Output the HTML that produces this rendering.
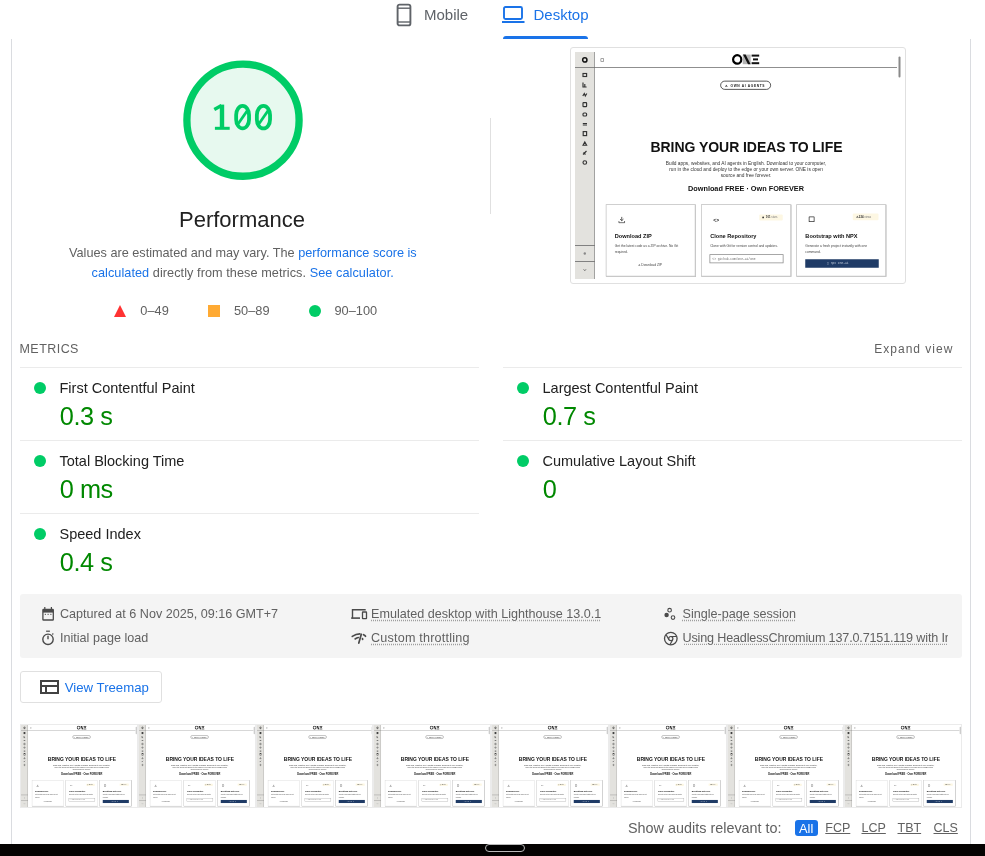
<!DOCTYPE html>
<html><head><meta charset="utf-8">
<style>
*{box-sizing:border-box}
html,body{margin:0;padding:0}
body{width:985px;height:856px;position:relative;overflow:hidden;background:#fff;font-family:"Liberation Sans",sans-serif;color:#212121}
.a{position:absolute;white-space:nowrap;line-height:1}
.vl{position:absolute;width:1px;background:#dadce0}
.hl{position:absolute;height:1px;background:#ebebeb}
a,.lnk{color:#1a73e8;text-decoration:none}
.dot{position:absolute;width:12px;height:12px;border-radius:50%;background:#0c6}
.mlabel{font-size:14.5px;color:#212121}
.mval{font-size:25.3px;color:#080;letter-spacing:-0.45px}
.meta{font-size:12.6px;color:#616161}
.ul{text-decoration:underline dotted #9e9e9e;text-underline-offset:2px}

.mk{position:absolute;left:0;top:0;width:1304.000px;height:908.000px;overflow:hidden;background:#fff;transform-origin:0 0}
.mk-a{position:absolute;white-space:nowrap;line-height:1}
.mk-sb{position:absolute;left:0;top:0;width:78.800px;height:908.000px;background:#e3e2de;border-right:3.200px solid #8a8a8a}
.mk-tl{position:absolute;left:0;top:60.800px;width:1288.000px;height:3.600px;background:#6a6a6a}
.mk-card{position:absolute;width:359.200px;height:289.600px;border:3.200px solid #c4c4c4;box-shadow:1.200px 1.200px 0 #808080;background:#fff}
.mk-h{left:33.200px;top:112.400px;font-size:22.400px;font-weight:bold;color:#111}
.mk-d{left:33.200px;top:151.200px;font-size:13.200px;line-height:24.000px;color:#444;white-space:nowrap}
</style></head>
<body><div id="root" style="position:absolute;left:0;top:0;width:985px;height:856px;will-change:transform">

<!-- tabs -->
<svg class="a" style="left:396px;top:3px" width="16" height="24" viewBox="0 0 16 24">
  <rect x="1.6" y="1.6" width="12.8" height="20.8" rx="2" fill="none" stroke="#5f6368" stroke-width="1.9"/>
  <line x1="2" y1="5.2" x2="14" y2="5.2" stroke="#5f6368" stroke-width="1.4"/>
  <line x1="2" y1="19" x2="14" y2="19" stroke="#5f6368" stroke-width="1.4"/>
</svg>
<div class="a" style="left:424px;top:7.3px;font-size:15px;color:#5f6368">Mobile</div>
<svg class="a" style="left:502px;top:6px" width="23" height="18" viewBox="0 0 23 18">
  <rect x="2" y="1" width="18" height="12" rx="1.5" fill="none" stroke="#1a73e8" stroke-width="1.9"/>
  <rect x="0" y="15" width="22.5" height="2" fill="#1a73e8"/>
</svg>
<div class="a" style="left:533.5px;top:7.3px;font-size:15px;color:#1a73e8">Desktop</div>
<div class="a" style="left:503px;top:36px;width:85px;height:3px;background:#1a73e8;border-radius:3px 3px 0 0"></div>

<!-- card borders -->
<div class="vl" style="left:11px;top:39px;height:805px"></div>
<div class="vl" style="left:970px;top:39px;height:805px"></div>

<!-- gauge -->
<svg class="a" style="left:182.5px;top:60px" width="120" height="120" viewBox="0 0 120 120">
  <circle cx="60" cy="60.15" r="56.1" fill="#e7f9ef" stroke="#0c6" stroke-width="7.3"/>
</svg>
<svg class="a" style="left:0;top:0" width="300" height="140" viewBox="0 0 300 140">
  <g fill="none" stroke="#0c6">
   <path d="M222 104.6V128" stroke-width="4.4"/>
   <path d="M214.3 109.6L221.5 105.6" stroke-width="3.4"/>
   <path d="M214.9 128.3H229.7" stroke-width="3"/>
   <rect x="236.15" y="105.9" width="12.9" height="22.5" rx="6.45" ry="9" stroke-width="3.8"/>
   <path d="M247.2 110.8L238.2 123.8" stroke-width="2.8"/>
   <rect x="256.85" y="105.9" width="13.2" height="22.5" rx="6.6" ry="9" stroke-width="3.8"/>
   <path d="M268 110.8L259 123.8" stroke-width="2.8"/>
  </g>
 </svg>

<div class="a" style="left:179px;top:208.5px;font-size:22px;color:#212121">Performance</div>
<div class="a" style="left:69px;top:246.8px;font-size:12.7px;color:#616161">Values are estimated and may vary. The <span class="lnk">performance score is</span></div>
<div class="a" style="left:91.5px;top:267.2px;font-size:12.7px;color:#616161;letter-spacing:0.06px"><span class="lnk">calculated</span> directly from these metrics. <span class="lnk">See calculator.</span></div>

<!-- legend -->
<svg class="a" style="left:114px;top:305px" width="12" height="12" viewBox="0 0 12 12"><polygon points="6,0 12,12 0,12" fill="#f33"/></svg>
<div class="a" style="left:140.3px;top:305px;font-size:12.8px;color:#616161">0–49</div>
<div class="a" style="left:208px;top:305px;width:12px;height:12px;background:#fa3"></div>
<div class="a" style="left:234px;top:305px;font-size:12.8px;color:#616161">50–89</div>
<div class="dot" style="left:309px;top:305px"></div>
<div class="a" style="left:334.5px;top:305px;font-size:12.8px;color:#616161">90–100</div>

<div class="vl" style="left:490px;top:118px;height:96px;background:#e0e0e0"></div>

<!-- screenshot thumb -->
<div id="thumb" class="a" style="left:570px;top:47px;width:336px;height:237px;border:1px solid #e0e0e0;border-radius:3px;background:#fff"></div><div class="a" style="left:575px;top:52px;width:326px;height:227px;overflow:hidden"><div class="mk" style="transform:scale(0.25)">
 <div class="mk-sb"></div>
 <div class="mk-tl"></div>
 <svg class="mk-a" style="left:0;top:0" width="80.000" height="908.000" viewBox="0 0 20 227">
  <circle cx="9.8" cy="7.9" r="2.15" fill="none" stroke="#111" stroke-width="1.5"/>
  <g fill="none" stroke="#333" stroke-width="1.15">
   <rect x="8" y="21.5" width="3.6" height="3" />
   <path d="M8 30.5v4.5h3.6M9.8 32v3"/>
   <path d="M7.8 44l1.5-2.5l1 2.5l1.5-2.5"/>
   <rect x="8" y="50.6" width="3.6" height="4" rx="0.6"/>
   <rect x="8" y="61" width="3.6" height="3" rx="1"/>
   <path d="M7.8 71.5h4.2M7.8 73h4.2"/>
   <rect x="8.2" y="79.6" width="3.4" height="4" />
   <path d="M8 93.2l1.8-3.2l1.8 3.2z"/>
   <path d="M8 102.5l3.5-3.5M8.5 100.5l2 2"/>
   <circle cx="9.8" cy="110.5" r="1.8"/>
  </g>
  <rect x="0" y="193" width="20" height="0.9" fill="#777"/>
  <rect x="0" y="209" width="20" height="0.9" fill="#777"/>
  <circle cx="9.8" cy="201.5" r="1.2" fill="#888"/>
  <path d="M8.6 217.3l1.2 1.4l1.2-1.4" fill="none" stroke="#555" stroke-width="0.8"/>
 </svg>
 <div class="mk-a" style="left:102.400px;top:24.800px;width:13.600px;height:14.400px;border:3.200px solid #888;border-radius:1.600px"></div>
 <svg class="mk-a" style="left:628.000px;top:8.000px" width="112.000" height="44.000" viewBox="0 0 28 11">
  <ellipse cx="5.2" cy="5.4" rx="4.1" ry="4.2" fill="none" stroke="#000" stroke-width="2.2"/>
  <rect x="10.7" y="0.6" width="8" height="9.6" fill="#b5b5b5"/>
  <path d="M11 0.6h2.6l5 9.6h-2.6z" fill="#111"/>
  <rect x="19.6" y="0.6" width="7.6" height="2" fill="#111"/>
  <rect x="21" y="4.4" width="5" height="2" fill="#111"/>
  <rect x="19.6" y="8.2" width="7.6" height="2" fill="#111"/>
 </svg>
 <div class="mk-a" style="left:1294.400px;top:17.600px;width:8.000px;height:84.000px;background:#8a8a8a;border-radius:4.000px"></div>
 <div class="mk-a" style="left:581.200px;top:114.800px;width:202.400px;height:36.000px;border:3.200px solid #222;border-radius:20.000px"></div>
 <div class="mk-a mk-t" style="left:601.200px;top:127.600px;font-size:13.200px;font-weight:bold;letter-spacing:2.480px;color:#222">⚠ OWN AI AGENTS</div>
 <div class="mk-a mk-t" style="left:302.000px;top:353.200px;font-size:56.000px;font-weight:bold;color:#111;letter-spacing:-0.200px">BRING YOUR IDEAS TO LIFE</div>
 <div class="mk-a mk-t" style="left:0;width:1368.000px;text-align:center;top:434.400px;font-size:19.200px;line-height:24.200px;color:#333;white-space:normal">Build apps, websites, and AI agents in English. Download to your computer,<br>run in the cloud and deploy to the edge or your own server. ONE is open<br>source and free forever.</div>
 <div class="mk-a mk-t" style="left:0;width:1368.000px;text-align:center;top:530.000px;font-size:29.200px;font-weight:bold;color:#111">Download FREE · Own FOREVER</div>

 <div class="mk-card" style="left:122.800px;top:608.800px">
  <svg class="mk-a" style="left:46.800px;top:46.000px" width="28.000" height="28.000" viewBox="0 0 7 7"><path d="M3.5 0.3v3.8M1.8 2.6l1.7 1.6l1.7-1.6M0.6 4.5v1.8h5.8v-1.8" fill="none" stroke="#333" stroke-width="0.8"/></svg>
  <div class="mk-a mk-t mk-h">Download ZIP</div>
  <div class="mk-a mk-t mk-d">Get the latest code as a ZIP archive. No Git<br>required.</div>
  <div class="mk-a mk-t" style="left:126.000px;top:234.400px;font-size:13.200px;color:#444">⏶ Download ZIP</div>
 </div>
 <div class="mk-card" style="left:504.400px;top:608.800px">
  <div class="mk-a mk-t" style="left:46.000px;top:48.800px;font-size:20.000px;color:#222;font-weight:bold">&lt;&gt;</div>
  <div class="mk-a" style="left:229.200px;top:38.000px;width:94.000px;height:24.400px;background:#fdf7e3;border-radius:4.000px"></div>
  <div class="mk-a" style="left:241.600px;top:46.400px;width:7.200px;height:7.200px;background:#333;border-radius:50%"></div>
  <div class="mk-a mk-t" style="left:256.000px;top:44.400px;font-size:11.200px;color:#333;font-weight:bold">101 <span style="font-weight:normal;color:#777">stars</span></div>
  <div class="mk-a mk-t mk-h">Clone Repository</div>
  <div class="mk-a mk-t mk-d">Clone with Git for version control and updates.</div>
  <div class="mk-a" style="left:30.400px;top:196.800px;width:296.400px;height:36.400px;border:3.200px solid #8a8a8a"></div>
  <div class="mk-a mk-t" style="left:42.000px;top:209.200px;font-size:12.000px;font-family:'Liberation Mono',monospace;color:#666">&lt;&gt;  github.com/one-ai/one</div>
 </div>
 <div class="mk-card" style="left:885.200px;top:608.800px">
  <div class="mk-a" style="left:47.200px;top:46.000px;width:22.400px;height:22.400px;border:3.200px solid #333;border-radius:2.000px"></div>
  <div class="mk-a" style="left:223.200px;top:34.400px;width:102.800px;height:26.800px;background:#fdf7e3;border-radius:4.000px"></div>
  <div class="mk-a mk-t" style="left:234.000px;top:42.400px;font-size:11.200px;color:#333;font-weight:bold">⚠ 224 <span style="font-weight:normal;color:#777">views</span></div>
  <div class="mk-a mk-t mk-h">Bootstrap with NPX</div>
  <div class="mk-a mk-t mk-d">Generate a fresh project instantly with one<br>command.</div>
  <div class="mk-a" style="left:33.200px;top:217.600px;width:293.200px;height:34.000px;background:#1f3b66"></div>
  <div class="mk-a mk-t" style="left:120.000px;top:227.200px;font-size:12.000px;font-family:'Liberation Mono',monospace;color:#bcc8d8">▢  npx one-ai</div>
 </div>
</div></div>

<!-- metrics -->
<div class="a" style="left:19.5px;top:343.3px;font-size:12.5px;letter-spacing:0.45px;color:#616161">METRICS</div>
<div class="a" style="left:874.3px;top:343.2px;font-size:12px;letter-spacing:1px;color:#616161">Expand view</div>

<div class="hl" style="left:20px;top:367px;width:459px"></div>
<div class="hl" style="left:503px;top:367px;width:459px"></div>
<div class="hl" style="left:20px;top:440px;width:459px"></div>
<div class="hl" style="left:503px;top:440px;width:459px"></div>
<div class="hl" style="left:20px;top:513px;width:459px"></div>

<div class="dot" style="left:34px;top:382px"></div>
<div class="a mlabel" style="left:59.5px;top:380.7px">First Contentful Paint</div>
<div class="a mval" style="left:59.8px;top:404.1px">0.3 s</div>
<div class="dot" style="left:34px;top:455px"></div>
<div class="a mlabel" style="left:59.5px;top:453.7px">Total Blocking Time</div>
<div class="a mval" style="left:59.8px;top:477.1px">0 ms</div>
<div class="dot" style="left:34px;top:528px"></div>
<div class="a mlabel" style="left:59.5px;top:526.7px">Speed Index</div>
<div class="a mval" style="left:59.8px;top:550.1px">0.4 s</div>

<div class="dot" style="left:517px;top:382px"></div>
<div class="a mlabel" style="left:542.5px;top:380.7px">Largest Contentful Paint</div>
<div class="a mval" style="left:542.8px;top:404.1px">0.7 s</div>
<div class="dot" style="left:517px;top:455px"></div>
<div class="a mlabel" style="left:542.5px;top:453.7px">Cumulative Layout Shift</div>
<div class="a mval" style="left:542.8px;top:477.1px">0</div>

<!-- meta box -->
<div class="a" style="left:20px;top:594px;width:942px;height:63.5px;background:#f4f4f4;border-radius:3px"></div>
<div class="a meta" style="left:60px;top:607.8px">Captured at 6 Nov 2025, 09:16 GMT+7</div>
<div class="a meta" style="left:60px;top:632px">Initial page load</div>
<div class="a meta" style="left:371px;top:607.8px"><span class="ul">Emulated desktop with Lighthouse 13.0.1</span></div>
<div class="a meta" style="left:371px;top:632px;letter-spacing:0.2px"><span class="ul">Custom throttling</span></div>
<div class="a meta" style="left:682.5px;top:607.8px"><span class="ul">Single-page session</span></div>
<div class="a meta" style="left:682.5px;top:632px;width:265.5px;overflow:hidden;letter-spacing:-0.16px"><span class="ul">Using HeadlessChromium 137.0.7151.119 with Integrated Lighthouse</span></div>

<!-- meta icons -->
<svg class="a" style="left:0;top:0;overflow:visible" width="985" height="700" viewBox="0 0 985 700">
 <g fill="none" stroke="#4a4a4a">
  <rect x="42.9" y="609.4" width="10.4" height="10.6" rx="0.6" stroke-width="1.3"/>
  <path d="M42.9 611.3h10.4" stroke-width="2.6"/>
  <path d="M44.8 607v2.4M51.4 607v2.4" stroke-width="1.2"/>
  <path d="M45.3 613.8v1.2M48.1 613.8v1.2M50.9 613.8v1.2" stroke-width="1"/>
  <circle cx="48" cy="639.3" r="5.2" stroke-width="1.4"/>
  <path d="M46.1 631.2h3.8" stroke-width="1.2"/>
  <path d="M48 635.8v3.4" stroke-width="1.4"/>
  <path d="M52.3 634.5l1-1" stroke-width="1.1"/>
  <path d="M352.5 618.2V609.7H365.7" stroke-width="1.4"/>
  <path d="M351.2 618.1H360" stroke-width="1.6"/>
  <rect x="362.5" y="612" width="4" height="6.6" rx="0.4" stroke-width="1.3"/>
  <circle cx="669.6" cy="610.2" r="1.8" stroke-width="1.1"/>
  <circle cx="673" cy="617.6" r="1.8" stroke-width="1.1"/>
  <circle cx="670.8" cy="638.6" r="6.3" stroke-width="1.3"/>
  <circle cx="670.8" cy="638.6" r="2.1" stroke-width="1.2"/>
  <path d="M670.8 636.5H676.6M668.9 639.6L666 634.5M672.7 639.7L669.9 644.8" stroke-width="1.2"/>
 </g>
 <circle cx="666.6" cy="615" r="2.2" fill="#4a4a4a"/>
 <g fill="none" stroke="#4a4a4a" stroke-linecap="round" stroke-width="1.7">
  <path d="M352.3 636.4Q356 633.9 359.8 633.9"/>
  <path d="M363.5 634.7Q364.9 635.3 365.5 636.3"/>
  <path d="M355.1 638.9Q356.8 637.9 358.4 637.5"/>
  <path d="M361.3 634.2L358.8 643.1"/>
  <path d="M362.5 638.6L362.6 639.3"/>
 </g>
</svg>
<!-- treemap button -->
<div class="a" style="left:20px;top:671px;width:142px;height:32px;border:1px solid #e0e0e0;border-radius:3px"></div>
<svg class="a" style="left:40px;top:680px" width="19" height="14" viewBox="0 0 19 14">
  <rect x="1" y="1" width="17" height="12" fill="none" stroke="#424242" stroke-width="2"/>
  <line x1="1" y1="6" x2="18" y2="6" stroke="#424242" stroke-width="2"/>
  <line x1="6" y1="6" x2="6" y2="13" stroke="#424242" stroke-width="2"/>
</svg>
<div class="a" style="left:64.8px;top:681px;font-size:13.2px;color:#1a73e8">View Treemap</div>

<!-- filmstrip -->
<div id="film" class="a" style="left:20px;top:724px;width:942px;height:85px;overflow:hidden"><div class="a" style="left:0.000px;top:0;width:117.750px;height:84.1px;border:1px solid #ebebeb;overflow:hidden"><div class="a" style="left:0;top:0;width:115.750px;height:82.1px;overflow:hidden;filter:blur(0.3px)"><div class="mk" style="transform:scale(0.088765,0.090419)">
 <div class="mk-sb"></div>
 <div class="mk-tl"></div>
 <svg class="mk-a" style="left:0;top:0" width="80.000" height="908.000" viewBox="0 0 20 227">
  <circle cx="9.8" cy="7.9" r="2.15" fill="none" stroke="#111" stroke-width="1.5"/>
  <g fill="none" stroke="#333" stroke-width="1.15">
   <rect x="8" y="21.5" width="3.6" height="3" />
   <path d="M8 30.5v4.5h3.6M9.8 32v3"/>
   <path d="M7.8 44l1.5-2.5l1 2.5l1.5-2.5"/>
   <rect x="8" y="50.6" width="3.6" height="4" rx="0.6"/>
   <rect x="8" y="61" width="3.6" height="3" rx="1"/>
   <path d="M7.8 71.5h4.2M7.8 73h4.2"/>
   <rect x="8.2" y="79.6" width="3.4" height="4" />
   <path d="M8 93.2l1.8-3.2l1.8 3.2z"/>
   <path d="M8 102.5l3.5-3.5M8.5 100.5l2 2"/>
   <circle cx="9.8" cy="110.5" r="1.8"/>
  </g>
  <rect x="0" y="193" width="20" height="0.9" fill="#777"/>
  <rect x="0" y="209" width="20" height="0.9" fill="#777"/>
  <circle cx="9.8" cy="201.5" r="1.2" fill="#888"/>
  <path d="M8.6 217.3l1.2 1.4l1.2-1.4" fill="none" stroke="#555" stroke-width="0.8"/>
 </svg>
 <div class="mk-a" style="left:102.400px;top:24.800px;width:13.600px;height:14.400px;border:3.200px solid #888;border-radius:1.600px"></div>
 <svg class="mk-a" style="left:628.000px;top:8.000px" width="112.000" height="44.000" viewBox="0 0 28 11">
  <ellipse cx="5.2" cy="5.4" rx="4.1" ry="4.2" fill="none" stroke="#000" stroke-width="2.2"/>
  <rect x="10.7" y="0.6" width="8" height="9.6" fill="#b5b5b5"/>
  <path d="M11 0.6h2.6l5 9.6h-2.6z" fill="#111"/>
  <rect x="19.6" y="0.6" width="7.6" height="2" fill="#111"/>
  <rect x="21" y="4.4" width="5" height="2" fill="#111"/>
  <rect x="19.6" y="8.2" width="7.6" height="2" fill="#111"/>
 </svg>
 <div class="mk-a" style="left:1294.400px;top:17.600px;width:8.000px;height:84.000px;background:#8a8a8a;border-radius:4.000px"></div>
 <div class="mk-a" style="left:581.200px;top:114.800px;width:202.400px;height:36.000px;border:3.200px solid #222;border-radius:20.000px"></div>
 <div class="mk-a mk-t" style="left:601.200px;top:127.600px;font-size:13.200px;font-weight:bold;letter-spacing:2.480px;color:#222">⚠ OWN AI AGENTS</div>
 <div class="mk-a mk-t" style="left:302.000px;top:353.200px;font-size:56.000px;font-weight:bold;color:#111;letter-spacing:-0.200px">BRING YOUR IDEAS TO LIFE</div>
 <div class="mk-a mk-t" style="left:0;width:1368.000px;text-align:center;top:434.400px;font-size:19.200px;line-height:24.200px;color:#333;white-space:normal">Build apps, websites, and AI agents in English. Download to your computer,<br>run in the cloud and deploy to the edge or your own server. ONE is open<br>source and free forever.</div>
 <div class="mk-a mk-t" style="left:0;width:1368.000px;text-align:center;top:530.000px;font-size:29.200px;font-weight:bold;color:#111">Download FREE · Own FOREVER</div>

 <div class="mk-card" style="left:122.800px;top:608.800px">
  <svg class="mk-a" style="left:46.800px;top:46.000px" width="28.000" height="28.000" viewBox="0 0 7 7"><path d="M3.5 0.3v3.8M1.8 2.6l1.7 1.6l1.7-1.6M0.6 4.5v1.8h5.8v-1.8" fill="none" stroke="#333" stroke-width="0.8"/></svg>
  <div class="mk-a mk-t mk-h">Download ZIP</div>
  <div class="mk-a mk-t mk-d">Get the latest code as a ZIP archive. No Git<br>required.</div>
  <div class="mk-a mk-t" style="left:126.000px;top:234.400px;font-size:13.200px;color:#444">⏶ Download ZIP</div>
 </div>
 <div class="mk-card" style="left:504.400px;top:608.800px">
  <div class="mk-a mk-t" style="left:46.000px;top:48.800px;font-size:20.000px;color:#222;font-weight:bold">&lt;&gt;</div>
  <div class="mk-a" style="left:229.200px;top:38.000px;width:94.000px;height:24.400px;background:#fdf7e3;border-radius:4.000px"></div>
  <div class="mk-a" style="left:241.600px;top:46.400px;width:7.200px;height:7.200px;background:#333;border-radius:50%"></div>
  <div class="mk-a mk-t" style="left:256.000px;top:44.400px;font-size:11.200px;color:#333;font-weight:bold">101 <span style="font-weight:normal;color:#777">stars</span></div>
  <div class="mk-a mk-t mk-h">Clone Repository</div>
  <div class="mk-a mk-t mk-d">Clone with Git for version control and updates.</div>
  <div class="mk-a" style="left:30.400px;top:196.800px;width:296.400px;height:36.400px;border:3.200px solid #8a8a8a"></div>
  <div class="mk-a mk-t" style="left:42.000px;top:209.200px;font-size:12.000px;font-family:'Liberation Mono',monospace;color:#666">&lt;&gt;  github.com/one-ai/one</div>
 </div>
 <div class="mk-card" style="left:885.200px;top:608.800px">
  <div class="mk-a" style="left:47.200px;top:46.000px;width:22.400px;height:22.400px;border:3.200px solid #333;border-radius:2.000px"></div>
  <div class="mk-a" style="left:223.200px;top:34.400px;width:102.800px;height:26.800px;background:#fdf7e3;border-radius:4.000px"></div>
  <div class="mk-a mk-t" style="left:234.000px;top:42.400px;font-size:11.200px;color:#333;font-weight:bold">⚠ 224 <span style="font-weight:normal;color:#777">views</span></div>
  <div class="mk-a mk-t mk-h">Bootstrap with NPX</div>
  <div class="mk-a mk-t mk-d">Generate a fresh project instantly with one<br>command.</div>
  <div class="mk-a" style="left:33.200px;top:217.600px;width:293.200px;height:34.000px;background:#1f3b66"></div>
  <div class="mk-a mk-t" style="left:120.000px;top:227.200px;font-size:12.000px;font-family:'Liberation Mono',monospace;color:#bcc8d8">▢  npx one-ai</div>
 </div>
</div></div></div><div class="a" style="left:117.750px;top:0;width:117.750px;height:84.1px;border:1px solid #ebebeb;overflow:hidden"><div class="a" style="left:0;top:0;width:115.750px;height:82.1px;overflow:hidden;filter:blur(0.3px)"><div class="mk" style="transform:scale(0.088765,0.090419)">
 <div class="mk-sb"></div>
 <div class="mk-tl"></div>
 <svg class="mk-a" style="left:0;top:0" width="80.000" height="908.000" viewBox="0 0 20 227">
  <circle cx="9.8" cy="7.9" r="2.15" fill="none" stroke="#111" stroke-width="1.5"/>
  <g fill="none" stroke="#333" stroke-width="1.15">
   <rect x="8" y="21.5" width="3.6" height="3" />
   <path d="M8 30.5v4.5h3.6M9.8 32v3"/>
   <path d="M7.8 44l1.5-2.5l1 2.5l1.5-2.5"/>
   <rect x="8" y="50.6" width="3.6" height="4" rx="0.6"/>
   <rect x="8" y="61" width="3.6" height="3" rx="1"/>
   <path d="M7.8 71.5h4.2M7.8 73h4.2"/>
   <rect x="8.2" y="79.6" width="3.4" height="4" />
   <path d="M8 93.2l1.8-3.2l1.8 3.2z"/>
   <path d="M8 102.5l3.5-3.5M8.5 100.5l2 2"/>
   <circle cx="9.8" cy="110.5" r="1.8"/>
  </g>
  <rect x="0" y="193" width="20" height="0.9" fill="#777"/>
  <rect x="0" y="209" width="20" height="0.9" fill="#777"/>
  <circle cx="9.8" cy="201.5" r="1.2" fill="#888"/>
  <path d="M8.6 217.3l1.2 1.4l1.2-1.4" fill="none" stroke="#555" stroke-width="0.8"/>
 </svg>
 <div class="mk-a" style="left:102.400px;top:24.800px;width:13.600px;height:14.400px;border:3.200px solid #888;border-radius:1.600px"></div>
 <svg class="mk-a" style="left:628.000px;top:8.000px" width="112.000" height="44.000" viewBox="0 0 28 11">
  <ellipse cx="5.2" cy="5.4" rx="4.1" ry="4.2" fill="none" stroke="#000" stroke-width="2.2"/>
  <rect x="10.7" y="0.6" width="8" height="9.6" fill="#b5b5b5"/>
  <path d="M11 0.6h2.6l5 9.6h-2.6z" fill="#111"/>
  <rect x="19.6" y="0.6" width="7.6" height="2" fill="#111"/>
  <rect x="21" y="4.4" width="5" height="2" fill="#111"/>
  <rect x="19.6" y="8.2" width="7.6" height="2" fill="#111"/>
 </svg>
 <div class="mk-a" style="left:1294.400px;top:17.600px;width:8.000px;height:84.000px;background:#8a8a8a;border-radius:4.000px"></div>
 <div class="mk-a" style="left:581.200px;top:114.800px;width:202.400px;height:36.000px;border:3.200px solid #222;border-radius:20.000px"></div>
 <div class="mk-a mk-t" style="left:601.200px;top:127.600px;font-size:13.200px;font-weight:bold;letter-spacing:2.480px;color:#222">⚠ OWN AI AGENTS</div>
 <div class="mk-a mk-t" style="left:302.000px;top:353.200px;font-size:56.000px;font-weight:bold;color:#111;letter-spacing:-0.200px">BRING YOUR IDEAS TO LIFE</div>
 <div class="mk-a mk-t" style="left:0;width:1368.000px;text-align:center;top:434.400px;font-size:19.200px;line-height:24.200px;color:#333;white-space:normal">Build apps, websites, and AI agents in English. Download to your computer,<br>run in the cloud and deploy to the edge or your own server. ONE is open<br>source and free forever.</div>
 <div class="mk-a mk-t" style="left:0;width:1368.000px;text-align:center;top:530.000px;font-size:29.200px;font-weight:bold;color:#111">Download FREE · Own FOREVER</div>

 <div class="mk-card" style="left:122.800px;top:608.800px">
  <svg class="mk-a" style="left:46.800px;top:46.000px" width="28.000" height="28.000" viewBox="0 0 7 7"><path d="M3.5 0.3v3.8M1.8 2.6l1.7 1.6l1.7-1.6M0.6 4.5v1.8h5.8v-1.8" fill="none" stroke="#333" stroke-width="0.8"/></svg>
  <div class="mk-a mk-t mk-h">Download ZIP</div>
  <div class="mk-a mk-t mk-d">Get the latest code as a ZIP archive. No Git<br>required.</div>
  <div class="mk-a mk-t" style="left:126.000px;top:234.400px;font-size:13.200px;color:#444">⏶ Download ZIP</div>
 </div>
 <div class="mk-card" style="left:504.400px;top:608.800px">
  <div class="mk-a mk-t" style="left:46.000px;top:48.800px;font-size:20.000px;color:#222;font-weight:bold">&lt;&gt;</div>
  <div class="mk-a" style="left:229.200px;top:38.000px;width:94.000px;height:24.400px;background:#fdf7e3;border-radius:4.000px"></div>
  <div class="mk-a" style="left:241.600px;top:46.400px;width:7.200px;height:7.200px;background:#333;border-radius:50%"></div>
  <div class="mk-a mk-t" style="left:256.000px;top:44.400px;font-size:11.200px;color:#333;font-weight:bold">101 <span style="font-weight:normal;color:#777">stars</span></div>
  <div class="mk-a mk-t mk-h">Clone Repository</div>
  <div class="mk-a mk-t mk-d">Clone with Git for version control and updates.</div>
  <div class="mk-a" style="left:30.400px;top:196.800px;width:296.400px;height:36.400px;border:3.200px solid #8a8a8a"></div>
  <div class="mk-a mk-t" style="left:42.000px;top:209.200px;font-size:12.000px;font-family:'Liberation Mono',monospace;color:#666">&lt;&gt;  github.com/one-ai/one</div>
 </div>
 <div class="mk-card" style="left:885.200px;top:608.800px">
  <div class="mk-a" style="left:47.200px;top:46.000px;width:22.400px;height:22.400px;border:3.200px solid #333;border-radius:2.000px"></div>
  <div class="mk-a" style="left:223.200px;top:34.400px;width:102.800px;height:26.800px;background:#fdf7e3;border-radius:4.000px"></div>
  <div class="mk-a mk-t" style="left:234.000px;top:42.400px;font-size:11.200px;color:#333;font-weight:bold">⚠ 224 <span style="font-weight:normal;color:#777">views</span></div>
  <div class="mk-a mk-t mk-h">Bootstrap with NPX</div>
  <div class="mk-a mk-t mk-d">Generate a fresh project instantly with one<br>command.</div>
  <div class="mk-a" style="left:33.200px;top:217.600px;width:293.200px;height:34.000px;background:#1f3b66"></div>
  <div class="mk-a mk-t" style="left:120.000px;top:227.200px;font-size:12.000px;font-family:'Liberation Mono',monospace;color:#bcc8d8">▢  npx one-ai</div>
 </div>
</div></div></div><div class="a" style="left:235.500px;top:0;width:117.750px;height:84.1px;border:1px solid #ebebeb;overflow:hidden"><div class="a" style="left:0;top:0;width:115.750px;height:82.1px;overflow:hidden;filter:blur(0.3px)"><div class="mk" style="transform:scale(0.088765,0.090419)">
 <div class="mk-sb"></div>
 <div class="mk-tl"></div>
 <svg class="mk-a" style="left:0;top:0" width="80.000" height="908.000" viewBox="0 0 20 227">
  <circle cx="9.8" cy="7.9" r="2.15" fill="none" stroke="#111" stroke-width="1.5"/>
  <g fill="none" stroke="#333" stroke-width="1.15">
   <rect x="8" y="21.5" width="3.6" height="3" />
   <path d="M8 30.5v4.5h3.6M9.8 32v3"/>
   <path d="M7.8 44l1.5-2.5l1 2.5l1.5-2.5"/>
   <rect x="8" y="50.6" width="3.6" height="4" rx="0.6"/>
   <rect x="8" y="61" width="3.6" height="3" rx="1"/>
   <path d="M7.8 71.5h4.2M7.8 73h4.2"/>
   <rect x="8.2" y="79.6" width="3.4" height="4" />
   <path d="M8 93.2l1.8-3.2l1.8 3.2z"/>
   <path d="M8 102.5l3.5-3.5M8.5 100.5l2 2"/>
   <circle cx="9.8" cy="110.5" r="1.8"/>
  </g>
  <rect x="0" y="193" width="20" height="0.9" fill="#777"/>
  <rect x="0" y="209" width="20" height="0.9" fill="#777"/>
  <circle cx="9.8" cy="201.5" r="1.2" fill="#888"/>
  <path d="M8.6 217.3l1.2 1.4l1.2-1.4" fill="none" stroke="#555" stroke-width="0.8"/>
 </svg>
 <div class="mk-a" style="left:102.400px;top:24.800px;width:13.600px;height:14.400px;border:3.200px solid #888;border-radius:1.600px"></div>
 <svg class="mk-a" style="left:628.000px;top:8.000px" width="112.000" height="44.000" viewBox="0 0 28 11">
  <ellipse cx="5.2" cy="5.4" rx="4.1" ry="4.2" fill="none" stroke="#000" stroke-width="2.2"/>
  <rect x="10.7" y="0.6" width="8" height="9.6" fill="#b5b5b5"/>
  <path d="M11 0.6h2.6l5 9.6h-2.6z" fill="#111"/>
  <rect x="19.6" y="0.6" width="7.6" height="2" fill="#111"/>
  <rect x="21" y="4.4" width="5" height="2" fill="#111"/>
  <rect x="19.6" y="8.2" width="7.6" height="2" fill="#111"/>
 </svg>
 <div class="mk-a" style="left:1294.400px;top:17.600px;width:8.000px;height:84.000px;background:#8a8a8a;border-radius:4.000px"></div>
 <div class="mk-a" style="left:581.200px;top:114.800px;width:202.400px;height:36.000px;border:3.200px solid #222;border-radius:20.000px"></div>
 <div class="mk-a mk-t" style="left:601.200px;top:127.600px;font-size:13.200px;font-weight:bold;letter-spacing:2.480px;color:#222">⚠ OWN AI AGENTS</div>
 <div class="mk-a mk-t" style="left:302.000px;top:353.200px;font-size:56.000px;font-weight:bold;color:#111;letter-spacing:-0.200px">BRING YOUR IDEAS TO LIFE</div>
 <div class="mk-a mk-t" style="left:0;width:1368.000px;text-align:center;top:434.400px;font-size:19.200px;line-height:24.200px;color:#333;white-space:normal">Build apps, websites, and AI agents in English. Download to your computer,<br>run in the cloud and deploy to the edge or your own server. ONE is open<br>source and free forever.</div>
 <div class="mk-a mk-t" style="left:0;width:1368.000px;text-align:center;top:530.000px;font-size:29.200px;font-weight:bold;color:#111">Download FREE · Own FOREVER</div>

 <div class="mk-card" style="left:122.800px;top:608.800px">
  <svg class="mk-a" style="left:46.800px;top:46.000px" width="28.000" height="28.000" viewBox="0 0 7 7"><path d="M3.5 0.3v3.8M1.8 2.6l1.7 1.6l1.7-1.6M0.6 4.5v1.8h5.8v-1.8" fill="none" stroke="#333" stroke-width="0.8"/></svg>
  <div class="mk-a mk-t mk-h">Download ZIP</div>
  <div class="mk-a mk-t mk-d">Get the latest code as a ZIP archive. No Git<br>required.</div>
  <div class="mk-a mk-t" style="left:126.000px;top:234.400px;font-size:13.200px;color:#444">⏶ Download ZIP</div>
 </div>
 <div class="mk-card" style="left:504.400px;top:608.800px">
  <div class="mk-a mk-t" style="left:46.000px;top:48.800px;font-size:20.000px;color:#222;font-weight:bold">&lt;&gt;</div>
  <div class="mk-a" style="left:229.200px;top:38.000px;width:94.000px;height:24.400px;background:#fdf7e3;border-radius:4.000px"></div>
  <div class="mk-a" style="left:241.600px;top:46.400px;width:7.200px;height:7.200px;background:#333;border-radius:50%"></div>
  <div class="mk-a mk-t" style="left:256.000px;top:44.400px;font-size:11.200px;color:#333;font-weight:bold">101 <span style="font-weight:normal;color:#777">stars</span></div>
  <div class="mk-a mk-t mk-h">Clone Repository</div>
  <div class="mk-a mk-t mk-d">Clone with Git for version control and updates.</div>
  <div class="mk-a" style="left:30.400px;top:196.800px;width:296.400px;height:36.400px;border:3.200px solid #8a8a8a"></div>
  <div class="mk-a mk-t" style="left:42.000px;top:209.200px;font-size:12.000px;font-family:'Liberation Mono',monospace;color:#666">&lt;&gt;  github.com/one-ai/one</div>
 </div>
 <div class="mk-card" style="left:885.200px;top:608.800px">
  <div class="mk-a" style="left:47.200px;top:46.000px;width:22.400px;height:22.400px;border:3.200px solid #333;border-radius:2.000px"></div>
  <div class="mk-a" style="left:223.200px;top:34.400px;width:102.800px;height:26.800px;background:#fdf7e3;border-radius:4.000px"></div>
  <div class="mk-a mk-t" style="left:234.000px;top:42.400px;font-size:11.200px;color:#333;font-weight:bold">⚠ 224 <span style="font-weight:normal;color:#777">views</span></div>
  <div class="mk-a mk-t mk-h">Bootstrap with NPX</div>
  <div class="mk-a mk-t mk-d">Generate a fresh project instantly with one<br>command.</div>
  <div class="mk-a" style="left:33.200px;top:217.600px;width:293.200px;height:34.000px;background:#1f3b66"></div>
  <div class="mk-a mk-t" style="left:120.000px;top:227.200px;font-size:12.000px;font-family:'Liberation Mono',monospace;color:#bcc8d8">▢  npx one-ai</div>
 </div>
</div></div></div><div class="a" style="left:353.250px;top:0;width:117.750px;height:84.1px;border:1px solid #ebebeb;overflow:hidden"><div class="a" style="left:0;top:0;width:115.750px;height:82.1px;overflow:hidden;filter:blur(0.3px)"><div class="mk" style="transform:scale(0.088765,0.090419)">
 <div class="mk-sb"></div>
 <div class="mk-tl"></div>
 <svg class="mk-a" style="left:0;top:0" width="80.000" height="908.000" viewBox="0 0 20 227">
  <circle cx="9.8" cy="7.9" r="2.15" fill="none" stroke="#111" stroke-width="1.5"/>
  <g fill="none" stroke="#333" stroke-width="1.15">
   <rect x="8" y="21.5" width="3.6" height="3" />
   <path d="M8 30.5v4.5h3.6M9.8 32v3"/>
   <path d="M7.8 44l1.5-2.5l1 2.5l1.5-2.5"/>
   <rect x="8" y="50.6" width="3.6" height="4" rx="0.6"/>
   <rect x="8" y="61" width="3.6" height="3" rx="1"/>
   <path d="M7.8 71.5h4.2M7.8 73h4.2"/>
   <rect x="8.2" y="79.6" width="3.4" height="4" />
   <path d="M8 93.2l1.8-3.2l1.8 3.2z"/>
   <path d="M8 102.5l3.5-3.5M8.5 100.5l2 2"/>
   <circle cx="9.8" cy="110.5" r="1.8"/>
  </g>
  <rect x="0" y="193" width="20" height="0.9" fill="#777"/>
  <rect x="0" y="209" width="20" height="0.9" fill="#777"/>
  <circle cx="9.8" cy="201.5" r="1.2" fill="#888"/>
  <path d="M8.6 217.3l1.2 1.4l1.2-1.4" fill="none" stroke="#555" stroke-width="0.8"/>
 </svg>
 <div class="mk-a" style="left:102.400px;top:24.800px;width:13.600px;height:14.400px;border:3.200px solid #888;border-radius:1.600px"></div>
 <svg class="mk-a" style="left:628.000px;top:8.000px" width="112.000" height="44.000" viewBox="0 0 28 11">
  <ellipse cx="5.2" cy="5.4" rx="4.1" ry="4.2" fill="none" stroke="#000" stroke-width="2.2"/>
  <rect x="10.7" y="0.6" width="8" height="9.6" fill="#b5b5b5"/>
  <path d="M11 0.6h2.6l5 9.6h-2.6z" fill="#111"/>
  <rect x="19.6" y="0.6" width="7.6" height="2" fill="#111"/>
  <rect x="21" y="4.4" width="5" height="2" fill="#111"/>
  <rect x="19.6" y="8.2" width="7.6" height="2" fill="#111"/>
 </svg>
 <div class="mk-a" style="left:1294.400px;top:17.600px;width:8.000px;height:84.000px;background:#8a8a8a;border-radius:4.000px"></div>
 <div class="mk-a" style="left:581.200px;top:114.800px;width:202.400px;height:36.000px;border:3.200px solid #222;border-radius:20.000px"></div>
 <div class="mk-a mk-t" style="left:601.200px;top:127.600px;font-size:13.200px;font-weight:bold;letter-spacing:2.480px;color:#222">⚠ OWN AI AGENTS</div>
 <div class="mk-a mk-t" style="left:302.000px;top:353.200px;font-size:56.000px;font-weight:bold;color:#111;letter-spacing:-0.200px">BRING YOUR IDEAS TO LIFE</div>
 <div class="mk-a mk-t" style="left:0;width:1368.000px;text-align:center;top:434.400px;font-size:19.200px;line-height:24.200px;color:#333;white-space:normal">Build apps, websites, and AI agents in English. Download to your computer,<br>run in the cloud and deploy to the edge or your own server. ONE is open<br>source and free forever.</div>
 <div class="mk-a mk-t" style="left:0;width:1368.000px;text-align:center;top:530.000px;font-size:29.200px;font-weight:bold;color:#111">Download FREE · Own FOREVER</div>

 <div class="mk-card" style="left:122.800px;top:608.800px">
  <svg class="mk-a" style="left:46.800px;top:46.000px" width="28.000" height="28.000" viewBox="0 0 7 7"><path d="M3.5 0.3v3.8M1.8 2.6l1.7 1.6l1.7-1.6M0.6 4.5v1.8h5.8v-1.8" fill="none" stroke="#333" stroke-width="0.8"/></svg>
  <div class="mk-a mk-t mk-h">Download ZIP</div>
  <div class="mk-a mk-t mk-d">Get the latest code as a ZIP archive. No Git<br>required.</div>
  <div class="mk-a mk-t" style="left:126.000px;top:234.400px;font-size:13.200px;color:#444">⏶ Download ZIP</div>
 </div>
 <div class="mk-card" style="left:504.400px;top:608.800px">
  <div class="mk-a mk-t" style="left:46.000px;top:48.800px;font-size:20.000px;color:#222;font-weight:bold">&lt;&gt;</div>
  <div class="mk-a" style="left:229.200px;top:38.000px;width:94.000px;height:24.400px;background:#fdf7e3;border-radius:4.000px"></div>
  <div class="mk-a" style="left:241.600px;top:46.400px;width:7.200px;height:7.200px;background:#333;border-radius:50%"></div>
  <div class="mk-a mk-t" style="left:256.000px;top:44.400px;font-size:11.200px;color:#333;font-weight:bold">101 <span style="font-weight:normal;color:#777">stars</span></div>
  <div class="mk-a mk-t mk-h">Clone Repository</div>
  <div class="mk-a mk-t mk-d">Clone with Git for version control and updates.</div>
  <div class="mk-a" style="left:30.400px;top:196.800px;width:296.400px;height:36.400px;border:3.200px solid #8a8a8a"></div>
  <div class="mk-a mk-t" style="left:42.000px;top:209.200px;font-size:12.000px;font-family:'Liberation Mono',monospace;color:#666">&lt;&gt;  github.com/one-ai/one</div>
 </div>
 <div class="mk-card" style="left:885.200px;top:608.800px">
  <div class="mk-a" style="left:47.200px;top:46.000px;width:22.400px;height:22.400px;border:3.200px solid #333;border-radius:2.000px"></div>
  <div class="mk-a" style="left:223.200px;top:34.400px;width:102.800px;height:26.800px;background:#fdf7e3;border-radius:4.000px"></div>
  <div class="mk-a mk-t" style="left:234.000px;top:42.400px;font-size:11.200px;color:#333;font-weight:bold">⚠ 224 <span style="font-weight:normal;color:#777">views</span></div>
  <div class="mk-a mk-t mk-h">Bootstrap with NPX</div>
  <div class="mk-a mk-t mk-d">Generate a fresh project instantly with one<br>command.</div>
  <div class="mk-a" style="left:33.200px;top:217.600px;width:293.200px;height:34.000px;background:#1f3b66"></div>
  <div class="mk-a mk-t" style="left:120.000px;top:227.200px;font-size:12.000px;font-family:'Liberation Mono',monospace;color:#bcc8d8">▢  npx one-ai</div>
 </div>
</div></div></div><div class="a" style="left:471.000px;top:0;width:117.750px;height:84.1px;border:1px solid #ebebeb;overflow:hidden"><div class="a" style="left:0;top:0;width:115.750px;height:82.1px;overflow:hidden;filter:blur(0.3px)"><div class="mk" style="transform:scale(0.088765,0.090419)">
 <div class="mk-sb"></div>
 <div class="mk-tl"></div>
 <svg class="mk-a" style="left:0;top:0" width="80.000" height="908.000" viewBox="0 0 20 227">
  <circle cx="9.8" cy="7.9" r="2.15" fill="none" stroke="#111" stroke-width="1.5"/>
  <g fill="none" stroke="#333" stroke-width="1.15">
   <rect x="8" y="21.5" width="3.6" height="3" />
   <path d="M8 30.5v4.5h3.6M9.8 32v3"/>
   <path d="M7.8 44l1.5-2.5l1 2.5l1.5-2.5"/>
   <rect x="8" y="50.6" width="3.6" height="4" rx="0.6"/>
   <rect x="8" y="61" width="3.6" height="3" rx="1"/>
   <path d="M7.8 71.5h4.2M7.8 73h4.2"/>
   <rect x="8.2" y="79.6" width="3.4" height="4" />
   <path d="M8 93.2l1.8-3.2l1.8 3.2z"/>
   <path d="M8 102.5l3.5-3.5M8.5 100.5l2 2"/>
   <circle cx="9.8" cy="110.5" r="1.8"/>
  </g>
  <rect x="0" y="193" width="20" height="0.9" fill="#777"/>
  <rect x="0" y="209" width="20" height="0.9" fill="#777"/>
  <circle cx="9.8" cy="201.5" r="1.2" fill="#888"/>
  <path d="M8.6 217.3l1.2 1.4l1.2-1.4" fill="none" stroke="#555" stroke-width="0.8"/>
 </svg>
 <div class="mk-a" style="left:102.400px;top:24.800px;width:13.600px;height:14.400px;border:3.200px solid #888;border-radius:1.600px"></div>
 <svg class="mk-a" style="left:628.000px;top:8.000px" width="112.000" height="44.000" viewBox="0 0 28 11">
  <ellipse cx="5.2" cy="5.4" rx="4.1" ry="4.2" fill="none" stroke="#000" stroke-width="2.2"/>
  <rect x="10.7" y="0.6" width="8" height="9.6" fill="#b5b5b5"/>
  <path d="M11 0.6h2.6l5 9.6h-2.6z" fill="#111"/>
  <rect x="19.6" y="0.6" width="7.6" height="2" fill="#111"/>
  <rect x="21" y="4.4" width="5" height="2" fill="#111"/>
  <rect x="19.6" y="8.2" width="7.6" height="2" fill="#111"/>
 </svg>
 <div class="mk-a" style="left:1294.400px;top:17.600px;width:8.000px;height:84.000px;background:#8a8a8a;border-radius:4.000px"></div>
 <div class="mk-a" style="left:581.200px;top:114.800px;width:202.400px;height:36.000px;border:3.200px solid #222;border-radius:20.000px"></div>
 <div class="mk-a mk-t" style="left:601.200px;top:127.600px;font-size:13.200px;font-weight:bold;letter-spacing:2.480px;color:#222">⚠ OWN AI AGENTS</div>
 <div class="mk-a mk-t" style="left:302.000px;top:353.200px;font-size:56.000px;font-weight:bold;color:#111;letter-spacing:-0.200px">BRING YOUR IDEAS TO LIFE</div>
 <div class="mk-a mk-t" style="left:0;width:1368.000px;text-align:center;top:434.400px;font-size:19.200px;line-height:24.200px;color:#333;white-space:normal">Build apps, websites, and AI agents in English. Download to your computer,<br>run in the cloud and deploy to the edge or your own server. ONE is open<br>source and free forever.</div>
 <div class="mk-a mk-t" style="left:0;width:1368.000px;text-align:center;top:530.000px;font-size:29.200px;font-weight:bold;color:#111">Download FREE · Own FOREVER</div>

 <div class="mk-card" style="left:122.800px;top:608.800px">
  <svg class="mk-a" style="left:46.800px;top:46.000px" width="28.000" height="28.000" viewBox="0 0 7 7"><path d="M3.5 0.3v3.8M1.8 2.6l1.7 1.6l1.7-1.6M0.6 4.5v1.8h5.8v-1.8" fill="none" stroke="#333" stroke-width="0.8"/></svg>
  <div class="mk-a mk-t mk-h">Download ZIP</div>
  <div class="mk-a mk-t mk-d">Get the latest code as a ZIP archive. No Git<br>required.</div>
  <div class="mk-a mk-t" style="left:126.000px;top:234.400px;font-size:13.200px;color:#444">⏶ Download ZIP</div>
 </div>
 <div class="mk-card" style="left:504.400px;top:608.800px">
  <div class="mk-a mk-t" style="left:46.000px;top:48.800px;font-size:20.000px;color:#222;font-weight:bold">&lt;&gt;</div>
  <div class="mk-a" style="left:229.200px;top:38.000px;width:94.000px;height:24.400px;background:#fdf7e3;border-radius:4.000px"></div>
  <div class="mk-a" style="left:241.600px;top:46.400px;width:7.200px;height:7.200px;background:#333;border-radius:50%"></div>
  <div class="mk-a mk-t" style="left:256.000px;top:44.400px;font-size:11.200px;color:#333;font-weight:bold">101 <span style="font-weight:normal;color:#777">stars</span></div>
  <div class="mk-a mk-t mk-h">Clone Repository</div>
  <div class="mk-a mk-t mk-d">Clone with Git for version control and updates.</div>
  <div class="mk-a" style="left:30.400px;top:196.800px;width:296.400px;height:36.400px;border:3.200px solid #8a8a8a"></div>
  <div class="mk-a mk-t" style="left:42.000px;top:209.200px;font-size:12.000px;font-family:'Liberation Mono',monospace;color:#666">&lt;&gt;  github.com/one-ai/one</div>
 </div>
 <div class="mk-card" style="left:885.200px;top:608.800px">
  <div class="mk-a" style="left:47.200px;top:46.000px;width:22.400px;height:22.400px;border:3.200px solid #333;border-radius:2.000px"></div>
  <div class="mk-a" style="left:223.200px;top:34.400px;width:102.800px;height:26.800px;background:#fdf7e3;border-radius:4.000px"></div>
  <div class="mk-a mk-t" style="left:234.000px;top:42.400px;font-size:11.200px;color:#333;font-weight:bold">⚠ 224 <span style="font-weight:normal;color:#777">views</span></div>
  <div class="mk-a mk-t mk-h">Bootstrap with NPX</div>
  <div class="mk-a mk-t mk-d">Generate a fresh project instantly with one<br>command.</div>
  <div class="mk-a" style="left:33.200px;top:217.600px;width:293.200px;height:34.000px;background:#1f3b66"></div>
  <div class="mk-a mk-t" style="left:120.000px;top:227.200px;font-size:12.000px;font-family:'Liberation Mono',monospace;color:#bcc8d8">▢  npx one-ai</div>
 </div>
</div></div></div><div class="a" style="left:588.750px;top:0;width:117.750px;height:84.1px;border:1px solid #ebebeb;overflow:hidden"><div class="a" style="left:0;top:0;width:115.750px;height:82.1px;overflow:hidden;filter:blur(0.3px)"><div class="mk" style="transform:scale(0.088765,0.090419)">
 <div class="mk-sb"></div>
 <div class="mk-tl"></div>
 <svg class="mk-a" style="left:0;top:0" width="80.000" height="908.000" viewBox="0 0 20 227">
  <circle cx="9.8" cy="7.9" r="2.15" fill="none" stroke="#111" stroke-width="1.5"/>
  <g fill="none" stroke="#333" stroke-width="1.15">
   <rect x="8" y="21.5" width="3.6" height="3" />
   <path d="M8 30.5v4.5h3.6M9.8 32v3"/>
   <path d="M7.8 44l1.5-2.5l1 2.5l1.5-2.5"/>
   <rect x="8" y="50.6" width="3.6" height="4" rx="0.6"/>
   <rect x="8" y="61" width="3.6" height="3" rx="1"/>
   <path d="M7.8 71.5h4.2M7.8 73h4.2"/>
   <rect x="8.2" y="79.6" width="3.4" height="4" />
   <path d="M8 93.2l1.8-3.2l1.8 3.2z"/>
   <path d="M8 102.5l3.5-3.5M8.5 100.5l2 2"/>
   <circle cx="9.8" cy="110.5" r="1.8"/>
  </g>
  <rect x="0" y="193" width="20" height="0.9" fill="#777"/>
  <rect x="0" y="209" width="20" height="0.9" fill="#777"/>
  <circle cx="9.8" cy="201.5" r="1.2" fill="#888"/>
  <path d="M8.6 217.3l1.2 1.4l1.2-1.4" fill="none" stroke="#555" stroke-width="0.8"/>
 </svg>
 <div class="mk-a" style="left:102.400px;top:24.800px;width:13.600px;height:14.400px;border:3.200px solid #888;border-radius:1.600px"></div>
 <svg class="mk-a" style="left:628.000px;top:8.000px" width="112.000" height="44.000" viewBox="0 0 28 11">
  <ellipse cx="5.2" cy="5.4" rx="4.1" ry="4.2" fill="none" stroke="#000" stroke-width="2.2"/>
  <rect x="10.7" y="0.6" width="8" height="9.6" fill="#b5b5b5"/>
  <path d="M11 0.6h2.6l5 9.6h-2.6z" fill="#111"/>
  <rect x="19.6" y="0.6" width="7.6" height="2" fill="#111"/>
  <rect x="21" y="4.4" width="5" height="2" fill="#111"/>
  <rect x="19.6" y="8.2" width="7.6" height="2" fill="#111"/>
 </svg>
 <div class="mk-a" style="left:1294.400px;top:17.600px;width:8.000px;height:84.000px;background:#8a8a8a;border-radius:4.000px"></div>
 <div class="mk-a" style="left:581.200px;top:114.800px;width:202.400px;height:36.000px;border:3.200px solid #222;border-radius:20.000px"></div>
 <div class="mk-a mk-t" style="left:601.200px;top:127.600px;font-size:13.200px;font-weight:bold;letter-spacing:2.480px;color:#222">⚠ OWN AI AGENTS</div>
 <div class="mk-a mk-t" style="left:302.000px;top:353.200px;font-size:56.000px;font-weight:bold;color:#111;letter-spacing:-0.200px">BRING YOUR IDEAS TO LIFE</div>
 <div class="mk-a mk-t" style="left:0;width:1368.000px;text-align:center;top:434.400px;font-size:19.200px;line-height:24.200px;color:#333;white-space:normal">Build apps, websites, and AI agents in English. Download to your computer,<br>run in the cloud and deploy to the edge or your own server. ONE is open<br>source and free forever.</div>
 <div class="mk-a mk-t" style="left:0;width:1368.000px;text-align:center;top:530.000px;font-size:29.200px;font-weight:bold;color:#111">Download FREE · Own FOREVER</div>

 <div class="mk-card" style="left:122.800px;top:608.800px">
  <svg class="mk-a" style="left:46.800px;top:46.000px" width="28.000" height="28.000" viewBox="0 0 7 7"><path d="M3.5 0.3v3.8M1.8 2.6l1.7 1.6l1.7-1.6M0.6 4.5v1.8h5.8v-1.8" fill="none" stroke="#333" stroke-width="0.8"/></svg>
  <div class="mk-a mk-t mk-h">Download ZIP</div>
  <div class="mk-a mk-t mk-d">Get the latest code as a ZIP archive. No Git<br>required.</div>
  <div class="mk-a mk-t" style="left:126.000px;top:234.400px;font-size:13.200px;color:#444">⏶ Download ZIP</div>
 </div>
 <div class="mk-card" style="left:504.400px;top:608.800px">
  <div class="mk-a mk-t" style="left:46.000px;top:48.800px;font-size:20.000px;color:#222;font-weight:bold">&lt;&gt;</div>
  <div class="mk-a" style="left:229.200px;top:38.000px;width:94.000px;height:24.400px;background:#fdf7e3;border-radius:4.000px"></div>
  <div class="mk-a" style="left:241.600px;top:46.400px;width:7.200px;height:7.200px;background:#333;border-radius:50%"></div>
  <div class="mk-a mk-t" style="left:256.000px;top:44.400px;font-size:11.200px;color:#333;font-weight:bold">101 <span style="font-weight:normal;color:#777">stars</span></div>
  <div class="mk-a mk-t mk-h">Clone Repository</div>
  <div class="mk-a mk-t mk-d">Clone with Git for version control and updates.</div>
  <div class="mk-a" style="left:30.400px;top:196.800px;width:296.400px;height:36.400px;border:3.200px solid #8a8a8a"></div>
  <div class="mk-a mk-t" style="left:42.000px;top:209.200px;font-size:12.000px;font-family:'Liberation Mono',monospace;color:#666">&lt;&gt;  github.com/one-ai/one</div>
 </div>
 <div class="mk-card" style="left:885.200px;top:608.800px">
  <div class="mk-a" style="left:47.200px;top:46.000px;width:22.400px;height:22.400px;border:3.200px solid #333;border-radius:2.000px"></div>
  <div class="mk-a" style="left:223.200px;top:34.400px;width:102.800px;height:26.800px;background:#fdf7e3;border-radius:4.000px"></div>
  <div class="mk-a mk-t" style="left:234.000px;top:42.400px;font-size:11.200px;color:#333;font-weight:bold">⚠ 224 <span style="font-weight:normal;color:#777">views</span></div>
  <div class="mk-a mk-t mk-h">Bootstrap with NPX</div>
  <div class="mk-a mk-t mk-d">Generate a fresh project instantly with one<br>command.</div>
  <div class="mk-a" style="left:33.200px;top:217.600px;width:293.200px;height:34.000px;background:#1f3b66"></div>
  <div class="mk-a mk-t" style="left:120.000px;top:227.200px;font-size:12.000px;font-family:'Liberation Mono',monospace;color:#bcc8d8">▢  npx one-ai</div>
 </div>
</div></div></div><div class="a" style="left:706.500px;top:0;width:117.750px;height:84.1px;border:1px solid #ebebeb;overflow:hidden"><div class="a" style="left:0;top:0;width:115.750px;height:82.1px;overflow:hidden;filter:blur(0.3px)"><div class="mk" style="transform:scale(0.088765,0.090419)">
 <div class="mk-sb"></div>
 <div class="mk-tl"></div>
 <svg class="mk-a" style="left:0;top:0" width="80.000" height="908.000" viewBox="0 0 20 227">
  <circle cx="9.8" cy="7.9" r="2.15" fill="none" stroke="#111" stroke-width="1.5"/>
  <g fill="none" stroke="#333" stroke-width="1.15">
   <rect x="8" y="21.5" width="3.6" height="3" />
   <path d="M8 30.5v4.5h3.6M9.8 32v3"/>
   <path d="M7.8 44l1.5-2.5l1 2.5l1.5-2.5"/>
   <rect x="8" y="50.6" width="3.6" height="4" rx="0.6"/>
   <rect x="8" y="61" width="3.6" height="3" rx="1"/>
   <path d="M7.8 71.5h4.2M7.8 73h4.2"/>
   <rect x="8.2" y="79.6" width="3.4" height="4" />
   <path d="M8 93.2l1.8-3.2l1.8 3.2z"/>
   <path d="M8 102.5l3.5-3.5M8.5 100.5l2 2"/>
   <circle cx="9.8" cy="110.5" r="1.8"/>
  </g>
  <rect x="0" y="193" width="20" height="0.9" fill="#777"/>
  <rect x="0" y="209" width="20" height="0.9" fill="#777"/>
  <circle cx="9.8" cy="201.5" r="1.2" fill="#888"/>
  <path d="M8.6 217.3l1.2 1.4l1.2-1.4" fill="none" stroke="#555" stroke-width="0.8"/>
 </svg>
 <div class="mk-a" style="left:102.400px;top:24.800px;width:13.600px;height:14.400px;border:3.200px solid #888;border-radius:1.600px"></div>
 <svg class="mk-a" style="left:628.000px;top:8.000px" width="112.000" height="44.000" viewBox="0 0 28 11">
  <ellipse cx="5.2" cy="5.4" rx="4.1" ry="4.2" fill="none" stroke="#000" stroke-width="2.2"/>
  <rect x="10.7" y="0.6" width="8" height="9.6" fill="#b5b5b5"/>
  <path d="M11 0.6h2.6l5 9.6h-2.6z" fill="#111"/>
  <rect x="19.6" y="0.6" width="7.6" height="2" fill="#111"/>
  <rect x="21" y="4.4" width="5" height="2" fill="#111"/>
  <rect x="19.6" y="8.2" width="7.6" height="2" fill="#111"/>
 </svg>
 <div class="mk-a" style="left:1294.400px;top:17.600px;width:8.000px;height:84.000px;background:#8a8a8a;border-radius:4.000px"></div>
 <div class="mk-a" style="left:581.200px;top:114.800px;width:202.400px;height:36.000px;border:3.200px solid #222;border-radius:20.000px"></div>
 <div class="mk-a mk-t" style="left:601.200px;top:127.600px;font-size:13.200px;font-weight:bold;letter-spacing:2.480px;color:#222">⚠ OWN AI AGENTS</div>
 <div class="mk-a mk-t" style="left:302.000px;top:353.200px;font-size:56.000px;font-weight:bold;color:#111;letter-spacing:-0.200px">BRING YOUR IDEAS TO LIFE</div>
 <div class="mk-a mk-t" style="left:0;width:1368.000px;text-align:center;top:434.400px;font-size:19.200px;line-height:24.200px;color:#333;white-space:normal">Build apps, websites, and AI agents in English. Download to your computer,<br>run in the cloud and deploy to the edge or your own server. ONE is open<br>source and free forever.</div>
 <div class="mk-a mk-t" style="left:0;width:1368.000px;text-align:center;top:530.000px;font-size:29.200px;font-weight:bold;color:#111">Download FREE · Own FOREVER</div>

 <div class="mk-card" style="left:122.800px;top:608.800px">
  <svg class="mk-a" style="left:46.800px;top:46.000px" width="28.000" height="28.000" viewBox="0 0 7 7"><path d="M3.5 0.3v3.8M1.8 2.6l1.7 1.6l1.7-1.6M0.6 4.5v1.8h5.8v-1.8" fill="none" stroke="#333" stroke-width="0.8"/></svg>
  <div class="mk-a mk-t mk-h">Download ZIP</div>
  <div class="mk-a mk-t mk-d">Get the latest code as a ZIP archive. No Git<br>required.</div>
  <div class="mk-a mk-t" style="left:126.000px;top:234.400px;font-size:13.200px;color:#444">⏶ Download ZIP</div>
 </div>
 <div class="mk-card" style="left:504.400px;top:608.800px">
  <div class="mk-a mk-t" style="left:46.000px;top:48.800px;font-size:20.000px;color:#222;font-weight:bold">&lt;&gt;</div>
  <div class="mk-a" style="left:229.200px;top:38.000px;width:94.000px;height:24.400px;background:#fdf7e3;border-radius:4.000px"></div>
  <div class="mk-a" style="left:241.600px;top:46.400px;width:7.200px;height:7.200px;background:#333;border-radius:50%"></div>
  <div class="mk-a mk-t" style="left:256.000px;top:44.400px;font-size:11.200px;color:#333;font-weight:bold">101 <span style="font-weight:normal;color:#777">stars</span></div>
  <div class="mk-a mk-t mk-h">Clone Repository</div>
  <div class="mk-a mk-t mk-d">Clone with Git for version control and updates.</div>
  <div class="mk-a" style="left:30.400px;top:196.800px;width:296.400px;height:36.400px;border:3.200px solid #8a8a8a"></div>
  <div class="mk-a mk-t" style="left:42.000px;top:209.200px;font-size:12.000px;font-family:'Liberation Mono',monospace;color:#666">&lt;&gt;  github.com/one-ai/one</div>
 </div>
 <div class="mk-card" style="left:885.200px;top:608.800px">
  <div class="mk-a" style="left:47.200px;top:46.000px;width:22.400px;height:22.400px;border:3.200px solid #333;border-radius:2.000px"></div>
  <div class="mk-a" style="left:223.200px;top:34.400px;width:102.800px;height:26.800px;background:#fdf7e3;border-radius:4.000px"></div>
  <div class="mk-a mk-t" style="left:234.000px;top:42.400px;font-size:11.200px;color:#333;font-weight:bold">⚠ 224 <span style="font-weight:normal;color:#777">views</span></div>
  <div class="mk-a mk-t mk-h">Bootstrap with NPX</div>
  <div class="mk-a mk-t mk-d">Generate a fresh project instantly with one<br>command.</div>
  <div class="mk-a" style="left:33.200px;top:217.600px;width:293.200px;height:34.000px;background:#1f3b66"></div>
  <div class="mk-a mk-t" style="left:120.000px;top:227.200px;font-size:12.000px;font-family:'Liberation Mono',monospace;color:#bcc8d8">▢  npx one-ai</div>
 </div>
</div></div></div><div class="a" style="left:824.250px;top:0;width:117.750px;height:84.1px;border:1px solid #ebebeb;overflow:hidden"><div class="a" style="left:0;top:0;width:115.750px;height:82.1px;overflow:hidden;filter:blur(0.3px)"><div class="mk" style="transform:scale(0.088765,0.090419)">
 <div class="mk-sb"></div>
 <div class="mk-tl"></div>
 <svg class="mk-a" style="left:0;top:0" width="80.000" height="908.000" viewBox="0 0 20 227">
  <circle cx="9.8" cy="7.9" r="2.15" fill="none" stroke="#111" stroke-width="1.5"/>
  <g fill="none" stroke="#333" stroke-width="1.15">
   <rect x="8" y="21.5" width="3.6" height="3" />
   <path d="M8 30.5v4.5h3.6M9.8 32v3"/>
   <path d="M7.8 44l1.5-2.5l1 2.5l1.5-2.5"/>
   <rect x="8" y="50.6" width="3.6" height="4" rx="0.6"/>
   <rect x="8" y="61" width="3.6" height="3" rx="1"/>
   <path d="M7.8 71.5h4.2M7.8 73h4.2"/>
   <rect x="8.2" y="79.6" width="3.4" height="4" />
   <path d="M8 93.2l1.8-3.2l1.8 3.2z"/>
   <path d="M8 102.5l3.5-3.5M8.5 100.5l2 2"/>
   <circle cx="9.8" cy="110.5" r="1.8"/>
  </g>
  <rect x="0" y="193" width="20" height="0.9" fill="#777"/>
  <rect x="0" y="209" width="20" height="0.9" fill="#777"/>
  <circle cx="9.8" cy="201.5" r="1.2" fill="#888"/>
  <path d="M8.6 217.3l1.2 1.4l1.2-1.4" fill="none" stroke="#555" stroke-width="0.8"/>
 </svg>
 <div class="mk-a" style="left:102.400px;top:24.800px;width:13.600px;height:14.400px;border:3.200px solid #888;border-radius:1.600px"></div>
 <svg class="mk-a" style="left:628.000px;top:8.000px" width="112.000" height="44.000" viewBox="0 0 28 11">
  <ellipse cx="5.2" cy="5.4" rx="4.1" ry="4.2" fill="none" stroke="#000" stroke-width="2.2"/>
  <rect x="10.7" y="0.6" width="8" height="9.6" fill="#b5b5b5"/>
  <path d="M11 0.6h2.6l5 9.6h-2.6z" fill="#111"/>
  <rect x="19.6" y="0.6" width="7.6" height="2" fill="#111"/>
  <rect x="21" y="4.4" width="5" height="2" fill="#111"/>
  <rect x="19.6" y="8.2" width="7.6" height="2" fill="#111"/>
 </svg>
 <div class="mk-a" style="left:1294.400px;top:17.600px;width:8.000px;height:84.000px;background:#8a8a8a;border-radius:4.000px"></div>
 <div class="mk-a" style="left:581.200px;top:114.800px;width:202.400px;height:36.000px;border:3.200px solid #222;border-radius:20.000px"></div>
 <div class="mk-a mk-t" style="left:601.200px;top:127.600px;font-size:13.200px;font-weight:bold;letter-spacing:2.480px;color:#222">⚠ OWN AI AGENTS</div>
 <div class="mk-a mk-t" style="left:302.000px;top:353.200px;font-size:56.000px;font-weight:bold;color:#111;letter-spacing:-0.200px">BRING YOUR IDEAS TO LIFE</div>
 <div class="mk-a mk-t" style="left:0;width:1368.000px;text-align:center;top:434.400px;font-size:19.200px;line-height:24.200px;color:#333;white-space:normal">Build apps, websites, and AI agents in English. Download to your computer,<br>run in the cloud and deploy to the edge or your own server. ONE is open<br>source and free forever.</div>
 <div class="mk-a mk-t" style="left:0;width:1368.000px;text-align:center;top:530.000px;font-size:29.200px;font-weight:bold;color:#111">Download FREE · Own FOREVER</div>

 <div class="mk-card" style="left:122.800px;top:608.800px">
  <svg class="mk-a" style="left:46.800px;top:46.000px" width="28.000" height="28.000" viewBox="0 0 7 7"><path d="M3.5 0.3v3.8M1.8 2.6l1.7 1.6l1.7-1.6M0.6 4.5v1.8h5.8v-1.8" fill="none" stroke="#333" stroke-width="0.8"/></svg>
  <div class="mk-a mk-t mk-h">Download ZIP</div>
  <div class="mk-a mk-t mk-d">Get the latest code as a ZIP archive. No Git<br>required.</div>
  <div class="mk-a mk-t" style="left:126.000px;top:234.400px;font-size:13.200px;color:#444">⏶ Download ZIP</div>
 </div>
 <div class="mk-card" style="left:504.400px;top:608.800px">
  <div class="mk-a mk-t" style="left:46.000px;top:48.800px;font-size:20.000px;color:#222;font-weight:bold">&lt;&gt;</div>
  <div class="mk-a" style="left:229.200px;top:38.000px;width:94.000px;height:24.400px;background:#fdf7e3;border-radius:4.000px"></div>
  <div class="mk-a" style="left:241.600px;top:46.400px;width:7.200px;height:7.200px;background:#333;border-radius:50%"></div>
  <div class="mk-a mk-t" style="left:256.000px;top:44.400px;font-size:11.200px;color:#333;font-weight:bold">101 <span style="font-weight:normal;color:#777">stars</span></div>
  <div class="mk-a mk-t mk-h">Clone Repository</div>
  <div class="mk-a mk-t mk-d">Clone with Git for version control and updates.</div>
  <div class="mk-a" style="left:30.400px;top:196.800px;width:296.400px;height:36.400px;border:3.200px solid #8a8a8a"></div>
  <div class="mk-a mk-t" style="left:42.000px;top:209.200px;font-size:12.000px;font-family:'Liberation Mono',monospace;color:#666">&lt;&gt;  github.com/one-ai/one</div>
 </div>
 <div class="mk-card" style="left:885.200px;top:608.800px">
  <div class="mk-a" style="left:47.200px;top:46.000px;width:22.400px;height:22.400px;border:3.200px solid #333;border-radius:2.000px"></div>
  <div class="mk-a" style="left:223.200px;top:34.400px;width:102.800px;height:26.800px;background:#fdf7e3;border-radius:4.000px"></div>
  <div class="mk-a mk-t" style="left:234.000px;top:42.400px;font-size:11.200px;color:#333;font-weight:bold">⚠ 224 <span style="font-weight:normal;color:#777">views</span></div>
  <div class="mk-a mk-t mk-h">Bootstrap with NPX</div>
  <div class="mk-a mk-t mk-d">Generate a fresh project instantly with one<br>command.</div>
  <div class="mk-a" style="left:33.200px;top:217.600px;width:293.200px;height:34.000px;background:#1f3b66"></div>
  <div class="mk-a mk-t" style="left:120.000px;top:227.200px;font-size:12.000px;font-family:'Liberation Mono',monospace;color:#bcc8d8">▢  npx one-ai</div>
 </div>
</div></div></div></div>

<!-- show audits -->
<div class="a" style="left:628px;top:820.5px;font-size:14.4px;color:#616161">Show audits relevant to:</div>
<div class="a" style="left:795px;top:820px;width:23px;height:15.5px;background:#1a73e8;border-radius:3px"></div>
<div class="a" style="left:799px;top:822.5px;font-size:12.8px;color:#fff">All</div>
<div class="a" style="left:825.3px;top:821.5px;font-size:12.5px;color:#616161;text-decoration:underline">FCP</div>
<div class="a" style="left:861.5px;top:821.5px;font-size:12.5px;color:#616161;text-decoration:underline">LCP</div>
<div class="a" style="left:897.5px;top:821.5px;font-size:12.5px;color:#616161;text-decoration:underline">TBT</div>
<div class="a" style="left:933.5px;top:821.5px;font-size:12.5px;color:#616161;text-decoration:underline">CLS</div>

<!-- bottom bar -->
<div class="a" style="left:0;top:844px;width:985px;height:12px;background:#050302"></div>
<div class="a" style="left:485px;top:844px;width:40px;height:8px;border:1.2px solid #b8b8b8;border-radius:4.5px;background:#000"></div>

</div></body></html>
